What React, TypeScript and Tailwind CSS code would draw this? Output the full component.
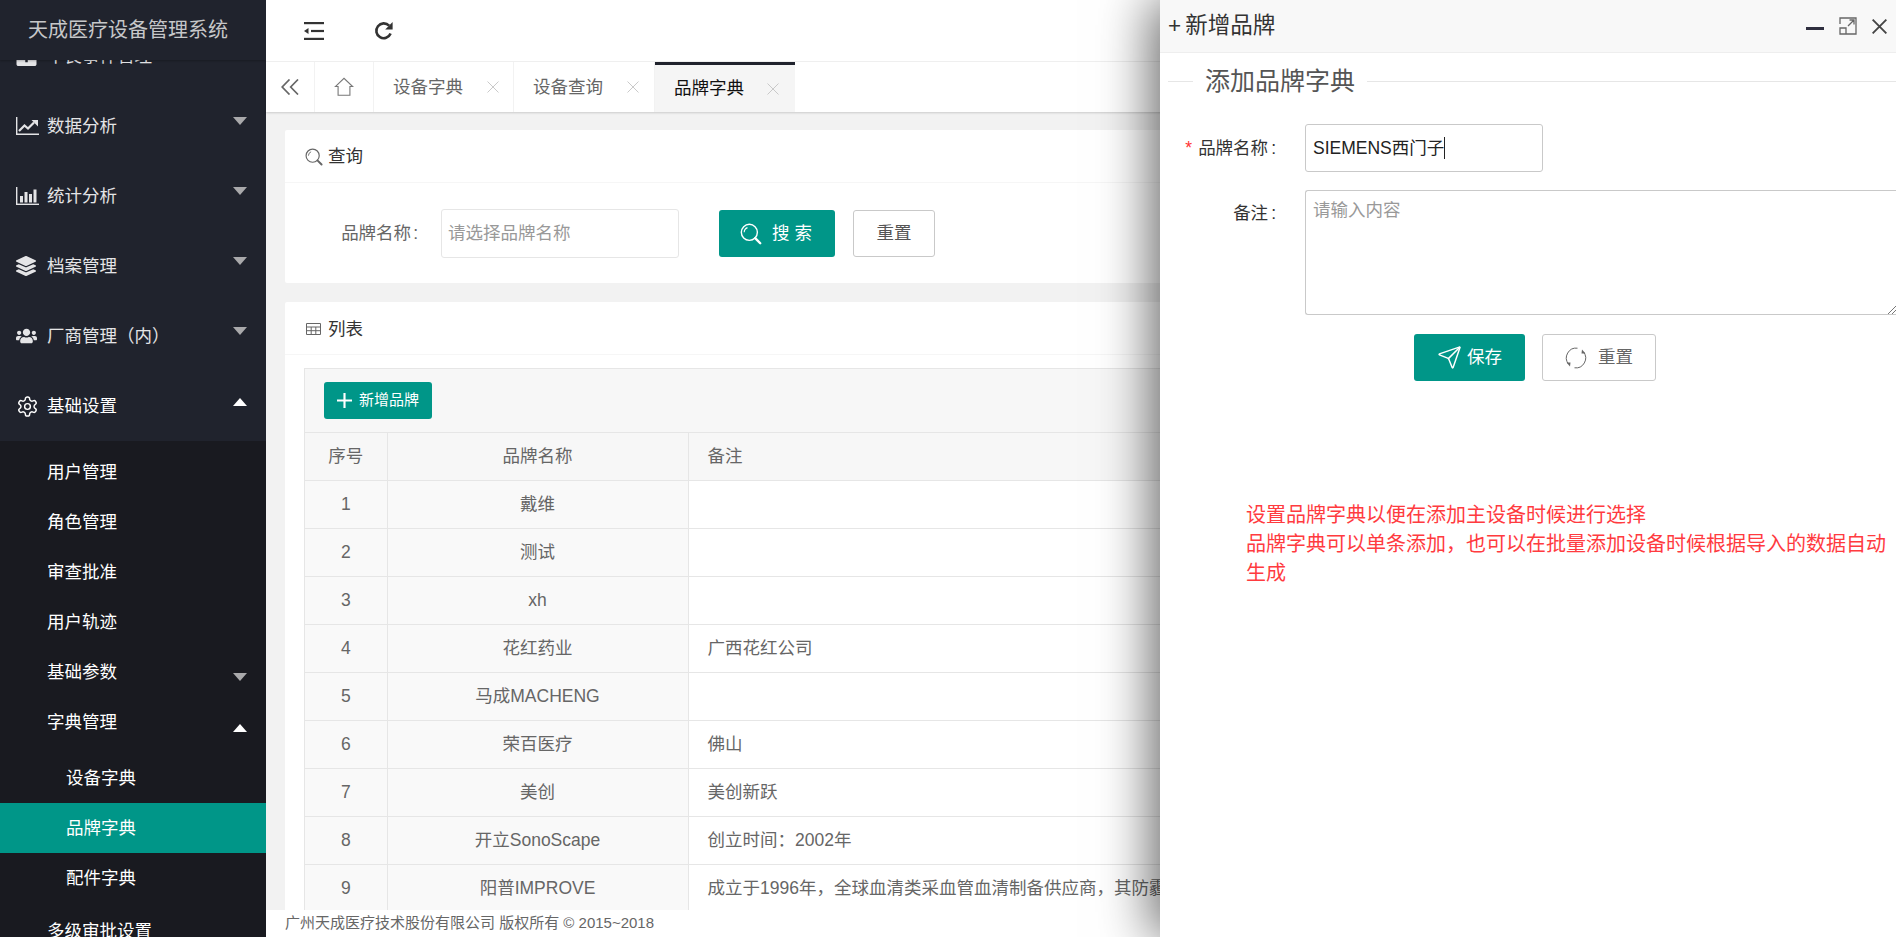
import { Send } from "lucide-react";
import { FaLayerGroup, FaUsers, FaBriefcaseMedical } from "react-icons/fa";
import { LuSettings } from "react-icons/lu";

const fontClass = "font-['Liberation_Sans','Noto_Sans_CJK_SC',sans-serif]";

const SearchIcon = ({ className }: { className: string }) => (
  <svg viewBox="0 0 20 20" fill="none" stroke="currentColor" className={className}>
    <circle cx="8.5" cy="8.5" r="7.3" strokeWidth="1.3" />
    <path d="M3.8 8.5a4.7 4.7 0 0 1 3-4.3" strokeWidth="1" />
    <path d="M13.8 13.8l4.6 4.6" strokeWidth="2.2" strokeLinecap="round" />
  </svg>
);

const CloseIcon = ({ className, width }: { className: string; width: string }) => (
  <svg viewBox="0 0 12 12" className={className} fill="none" stroke="currentColor" strokeWidth={width}>
    <path d="M.5.5l11 11M11.5.5l-11 11" />
  </svg>
);

const DownArrow = ({ mt }: { mt: string }) => (
  <span className={`ml-auto h-0 w-0 border-x-[7.5px] border-t-[8px] border-x-transparent border-t-[#a9a9ab] ${mt}`} />
);

const UpArrow = ({ mt }: { mt: string }) => (
  <span className={`ml-auto h-0 w-0 border-x-[7.5px] border-b-[8px] border-x-transparent border-b-white ${mt}`} />
);

const LineChartIcon = () => (
  <svg viewBox="0 0 23 18" className="h-[18px] w-[23px]" fill="none" stroke="currentColor">
    <path d="M.7 0v17.2H23" strokeWidth="1.4" />
    <path d="M3 14l5.5-5.5 3.5 3L18 5.5" strokeWidth="2.2" />
    <path d="M15.5 3H22v6.5z" fill="currentColor" stroke="none" />
  </svg>
);

const BarChartIcon = () => (
  <svg viewBox="0 0 23 18" className="h-[18px] w-[23px]" fill="currentColor">
    <rect x="0" y="0" width="1.4" height="18" />
    <rect x="0" y="16.6" width="23" height="1.4" />
    <rect x="4" y="9" width="3" height="6.5" />
    <rect x="8.5" y="5" width="3" height="10.5" />
    <rect x="13" y="7" width="3" height="8.5" />
    <rect x="17.5" y="2.5" width="3" height="13" />
  </svg>
);

const menus = [
  { label: "不良事件管理", icon: <FaBriefcaseMedical className="h-[20px] w-[21px]" /> },
  { label: "数据分析", icon: <LineChartIcon /> },
  { label: "统计分析", icon: <BarChartIcon /> },
  { label: "档案管理", icon: <FaLayerGroup className="h-[20px] w-[20px]" /> },
  { label: "厂商管理（内）", icon: <FaUsers className="h-[18px] w-[21px]" /> },
];

const Sidebar = () => (
  <aside className="relative h-[937px] w-[266px] shrink-0 overflow-hidden bg-[#20232d] text-[17.5px] text-[#e4e4e6]">
    <div className="relative z-10 flex h-[60px] items-center bg-[#20232d] pl-[28px] text-[20px] text-[#c6c7c9] shadow-[0_1px_2px_rgba(0,0,0,0.25)]">
      天成医疗设备管理系统
    </div>
    <div className="-mt-[39px]">
      {menus.map((m) => (
        <div key={m.label} className="flex h-[70px] items-center pr-[19px] pl-[16px]">
          <span className="flex w-[31px] shrink-0 justify-start">{m.icon}</span>
          <span>{m.label}</span>
          {m.label !== "不良事件管理" && <DownArrow mt="-mt-[10px]" />}
        </div>
      ))}
      <div className="flex h-[70px] items-center pr-[19px] pl-[16px] text-white">
        <span className="flex w-[31px] shrink-0 justify-start">
          <LuSettings strokeWidth={1.5} className="h-[23px] w-[23px]" />
        </span>
        <span>基础设置</span>
        <UpArrow mt="-mt-[8px]" />
      </div>
      <div className="bg-[#191a20] pt-[6px] text-white">
        {["用户管理", "角色管理", "审查批准", "用户轨迹"].map((s) => (
          <div key={s} className="flex h-[50px] items-center pl-[47px]">
            {s}
          </div>
        ))}
        <div className="flex h-[50px] items-center pr-[19px] pl-[47px]">
          基础参数
          <DownArrow mt="mt-[10px]" />
        </div>
        <div className="flex h-[50px] items-center pr-[19px] pl-[47px]">
          字典管理
          <UpArrow mt="mt-[12px]" />
        </div>
        <div className="py-[6px]">
          <div className="flex h-[50px] items-center pl-[66px]">设备字典</div>
          <div className="flex h-[50px] items-center bg-[#009688] pl-[66px]">品牌字典</div>
          <div className="flex h-[50px] items-center pl-[66px]">配件字典</div>
        </div>
        <div className="-mt-[3px] flex h-[50px] items-center pl-[47px]">多级审批设置</div>
      </div>
    </div>
  </aside>
);

const TopBar = () => (
  <div className="flex h-[62px] shrink-0 items-center border-b border-[#f2f2f2] bg-white pl-[38px] text-[#333]">
    <svg viewBox="0 0 20 18" className="h-[18px] w-[20px]" fill="currentColor">
      <rect x="0" y="0" width="20" height="2.2" />
      <rect x="7" y="7.9" width="13" height="2.2" />
      <rect x="0" y="15.8" width="20" height="2.2" />
      <path d="M4.5 6v6L0 9z" />
    </svg>
    <svg viewBox="0 0 20 20" className="ml-[50px] h-[20px] w-[20px]" fill="none" stroke="currentColor">
      <path d="M16.6 12.6a7.4 7.4 0 1 1-1.5-7.9" strokeWidth="2.6" />
      <path d="M18.6 1v7.4h-7.4z" fill="currentColor" stroke="none" />
    </svg>
  </div>
);

const Tab = ({ label, active, width }: { label: string; active?: boolean; width: string }) => (
  <div
    className={
      active
        ? `flex items-center border-t-[3px] border-[#20232d] bg-[#f5f5f5] pl-[19px] text-[#111] ${width}`
        : `flex items-center border-r border-[#f2f2f2] pl-[19px] text-[#666] ${width}`
    }
  >
    <span>{label}</span>
    <CloseIcon width="0.9" className={`h-[12px] w-[12px] text-[#c4c4c4] ${active ? "ml-[23px]" : "ml-[24px]"}`} />
  </div>
);

const Tabs = () => (
  <div className="relative flex h-[50px] shrink-0 bg-white text-[17.5px] shadow-[0_1px_2px_rgba(0,0,0,0.16)]">
    <div className="flex w-[49px] items-center justify-center border-r border-[#f2f2f2] text-[#666]">
      <svg viewBox="0 0 18 16" className="h-[16px] w-[18px]" fill="none" stroke="currentColor" strokeWidth="1.7">
        <path d="M8.5.5L1.2 8l7.3 7.5M17 .5L9.7 8l7.3 7.5" />
      </svg>
    </div>
    <div className="flex w-[59px] items-center justify-center border-r border-[#f2f2f2] text-[#777]">
      <svg viewBox="0 0 22 22" className="h-[20px] w-[20px]" fill="none" stroke="currentColor" strokeWidth="1.2">
        <path d="M1.5 10.5L11 1.5l9.5 9H17.5v9.5h-13v-9.5z" />
      </svg>
    </div>
    <Tab label="设备字典" width="w-[140px]" />
    <Tab label="设备查询" width="w-[141px]" />
    <Tab label="品牌字典" width="w-[140px]" active />
  </div>
);

const rows = [
  ["1", "戴维", ""],
  ["2", "测试", ""],
  ["3", "xh", ""],
  ["4", "花红药业", "广西花红公司"],
  ["5", "马成MACHENG", ""],
  ["6", "荣百医疗", "佛山"],
  ["7", "美创", "美创新跃"],
  ["8", "开立SonoScape", "创立时间：2002年"],
  ["9", "阳普IMPROVE", "成立于1996年，全球血清类采血管血清制备供应商，其防霾口罩也广受好评"],
];

const BrandTable = () => (
  <div className="mx-[19px] mt-[13px] border border-b-0 border-[#e6e6e6]">
    <div className="flex h-[63px] items-center bg-[#f7f7f7] pl-[19px]">
      <button className="flex h-[37px] w-[108px] items-center justify-center gap-[7px] rounded-[3px] bg-[#009688] text-[15px] text-white">
        <svg viewBox="0 0 14 14" className="h-[15px] w-[15px]" stroke="currentColor" strokeWidth="2">
          <path d="M7 0v14M0 7h14" />
        </svg>
        新增品牌
      </button>
    </div>
    <table className="w-full table-fixed border-collapse text-[17.5px] text-[#666]">
      <colgroup>
        <col className="w-[82px]" />
        <col className="w-[301px]" />
        <col />
      </colgroup>
      <thead>
        <tr className="h-[48px]">
          <th className="border border-l-0 border-[#e6e6e6] bg-[#f7f7f7] font-normal">序号</th>
          <th className="border border-[#e6e6e6] bg-[#f7f7f7] font-normal">品牌名称</th>
          <th className="border border-r-0 border-[#e6e6e6] bg-[#f7f7f7] pl-[19px] text-left font-normal">备注</th>
        </tr>
      </thead>
      <tbody>
        {rows.map((r) => (
          <tr key={r[0]} className="h-[48px]">
            <td className="border border-l-0 border-[#e6e6e6] bg-[#f9f9f9] text-center">{r[0]}</td>
            <td className="border border-[#e6e6e6] bg-[#f9f9f9] text-center">{r[1]}</td>
            <td className="truncate border border-r-0 border-[#e6e6e6] bg-white pl-[19px]">{r[2]}</td>
          </tr>
        ))}
      </tbody>
    </table>
  </div>
);

const Content = () => (
  <div className="flex-1 overflow-hidden bg-[#f2f2f2] px-[19px] pt-[18px]">
    <div className="h-[153px] rounded-[2px] bg-white">
      <div className="flex h-[53px] items-center gap-[5px] border-b border-[#f6f6f6] pt-[1px] pl-[20px] text-[17.5px] text-[#333]">
        <SearchIcon className="h-[18px] w-[18px] text-[#666]" />
        查询
      </div>
      <div className="flex items-center pt-[26px] text-[17.5px]">
        <label className="w-[133px] text-right text-[#666]">
          品牌名称<span className="ml-[2px]">:</span>
        </label>
        <div className="ml-[23px] flex h-[49px] w-[238px] items-center rounded-[3px] border border-[#e6e6e6] pl-[6px] text-[#999]">
          请选择品牌名称
        </div>
        <button className="ml-[40px] flex h-[47px] w-[116px] items-center justify-center gap-[10px] rounded-[3px] bg-[#009688] pl-[3px] tracking-[5px] text-white">
          <SearchIcon className="h-[22px] w-[22px]" />
          搜索
        </button>
        <button className="ml-[18px] h-[47px] w-[82px] rounded-[3px] border border-[#c9c9c9] text-[#555]">重置</button>
      </div>
    </div>
    <div className="mt-[19px] rounded-[2px] bg-white pb-[20px]">
      <div className="flex h-[53px] items-center gap-[7px] border-b border-[#f6f6f6] pt-[2px] pl-[21px] text-[17.5px] text-[#333]">
        <svg viewBox="0 0 15 12" className="h-[12px] w-[15px]" fill="none" stroke="#666" strokeWidth="1">
          <path d="M.5.5h14v11H.5zM.5 4h14M.5 7.7h14M5.2 4v7.5M9.8 4v7.5" />
        </svg>
        列表
      </div>
      <BrandTable />
    </div>
  </div>
);

const Panel = () => (
  <div className="absolute top-0 right-0 bottom-0 z-20 w-[736px] overflow-hidden bg-white shadow-[-8px_0_50px_rgba(0,0,0,0.6)]">
    <div className="flex h-[53px] items-center border-b border-[#eee] bg-[#f8f8f8] pr-[9px] pl-[8px] text-[22.5px] text-[#333]">
      <span className="mr-[4px]">+</span>
      <span>新增品牌</span>
      <span className="ml-auto h-[3px] w-[18px] translate-y-[2px] bg-[#2f2f3f]" />
      <svg viewBox="0 0 18 18" className="ml-[15px] h-[18px] w-[18px]" fill="none" stroke="#666" strokeWidth="1.3">
        <path d="M1 7V1h16v16H7M1 11h6v6H1zM9 9l6-6M10.5 3H15v4.5" />
      </svg>
      <CloseIcon width="1.5" className="ml-[15px] h-[15px] w-[15px] text-[#444]" />
    </div>
    <div className="mt-[16px] flex h-[25px] items-center pl-[8px] text-[25px] text-[#555]">
      <span className="h-px w-[25px] bg-[#e6e6e6]" />
      <span className="mx-[12px]">添加品牌字典</span>
      <span className="h-px flex-1 bg-[#e6e6e6]" />
    </div>
    <div className="mt-[30px] flex items-center text-[17.5px]">
      <label className="flex w-[116px] justify-end text-[#333]">
        <span className="mr-[6px] text-[#ff3333]">*</span>品牌名称<span className="ml-[3px]">:</span>
      </label>
      <div className="ml-[29px] flex h-[48px] w-[238px] items-center rounded-[3px] border border-[#c9c9c9] pl-[7px] text-[#222]">
        SIEMENS西门子<span className="h-[22px] w-px bg-[#222]" />
      </div>
    </div>
    <div className="mt-[18px] flex text-[17.5px]">
      <label className="w-[116px] pt-[10px] text-right text-[#333]">
        备注<span className="ml-[3px]">:</span>
      </label>
      <div className="relative ml-[29px] h-[125px] flex-1 rounded-l-[3px] border border-r-0 border-[#c9c9c9] pt-[6px] pl-[7px] text-[#999]">
        请输入内容
        <svg viewBox="0 0 8 8" className="absolute right-0 bottom-0 h-[8px] w-[8px]" stroke="#777" strokeWidth="1">
          <path d="M0 8l8-8M4 8l4-4" />
        </svg>
      </div>
    </div>
    <div className="mt-[19px] flex text-[17.5px]">
      <button className="ml-[254px] flex h-[47px] w-[111px] items-center justify-center gap-[5px] rounded-[3px] bg-[#009688] text-white">
        <Send strokeWidth={1.4} className="h-[25px] w-[25px]" />
        保存
      </button>
      <button className="ml-[17px] flex h-[47px] w-[114px] items-center justify-center gap-[11px] rounded-[3px] border border-[#c9c9c9] text-[#666]">
        <svg viewBox="0 0 22 22" className="h-[22px] w-[22px]" fill="none" stroke="#666" strokeWidth="1">
          <path d="M12.5 1.2A9.8 9.8 0 0 0 3.5 17M9.5 20.8A9.8 9.8 0 0 0 18.5 5" />
          <path d="M1.5 15.5l4 0-.5 4zM20.5 6.5l-4 0 .5-4z" fill="#666" stroke="none" />
        </svg>
        重置
      </button>
    </div>
    <div className="mt-[120px] pr-[8px] pl-[86px] text-[20px] leading-[29px] text-[#ff3b3f]">
      设置品牌字典以便在添加主设备时候进行选择
      <br />
      品牌字典可以单条添加，也可以在批量添加设备时候根据导入的数据自动生成
    </div>
  </div>
);

export default function App() {
  return (
    <div className={`relative flex h-[937px] w-full overflow-hidden ${fontClass}`}>
      <Sidebar />
      <div className="flex h-[937px] min-w-0 flex-1 flex-col">
        <TopBar />
        <Tabs />
        <Content />
        <div className="z-10 flex h-[27px] shrink-0 items-center bg-white pl-[19px] text-[15px] text-[#666]">
          广州天成医疗技术股份有限公司 版权所有 © 2015~2018
        </div>
      </div>
      <Panel />
    </div>
  );
}
